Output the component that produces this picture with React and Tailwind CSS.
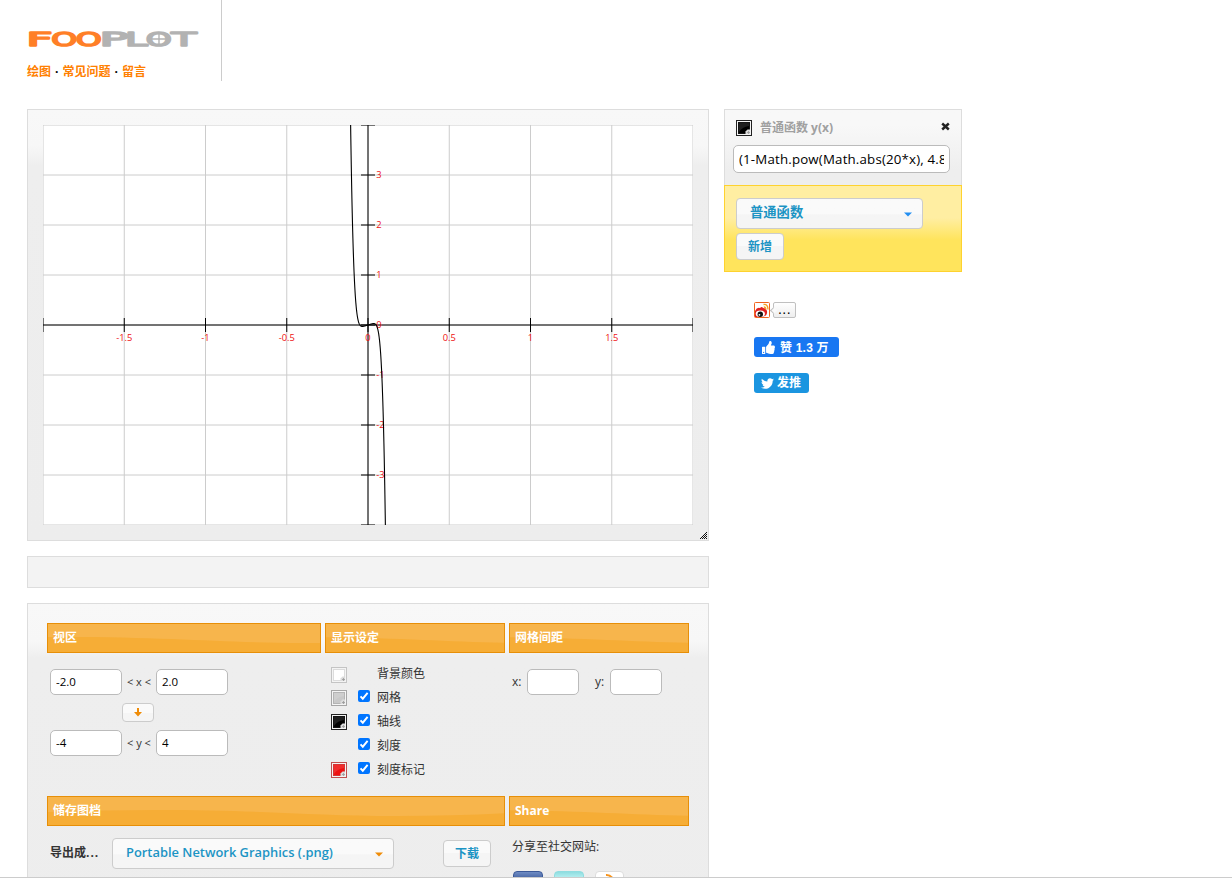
import { useState } from "react";
import { FaThumbsUp, FaTwitter } from "react-icons/fa";

const WIDTH = 650;
const HEIGHT = 400;
const X_UNIT = 162.5;
const Y_UNIT = 50;

const xTicks = [-1.5, -1, -0.5, 0, 0.5, 1, 1.5];
const yTicks = [3, 2, 1, 0, -1, -2, -3];

const toX = (x) => WIDTH / 2 + x * X_UNIT;
const toY = (y) => HEIGHT / 2 - y * Y_UNIT;

const f = (x) => (1 - Math.pow(Math.abs(20 * x), 4.8)) * x;

const curve = Array.from({ length: 241 })
  .map((_, i) => {
    const x = -0.12 + i * 0.001;
    return `${toX(x).toFixed(2)},${toY(f(x)).toFixed(2)}`;
  })
  .join(" ");

// dots of the resize grip: every other pixel below the diagonal
const gripDots = [];
for (let y = 0; y < 7; y++) {
  for (let x = 6 - y; x < 7; x++) {
    if ((x + y) % 2 === 0) gripDots.push([x, y]);
  }
}

function Logo() {
  const letters = [
    ["F", -0.5, 26, "#ff7f27"],
    ["O", 24.3, 26, "#ff7f27"],
    ["O", 48.8, 26, "#ff7f27"],
    ["P", 72.5, 29, "#b2b2b2"],
    ["L", 98, 22.5, "#b2b2b2"],
    ["O", 118.8, 26, "#b2b2b2"],
    ["T", 144.5, 25, "#b2b2b2"],
  ];
  return (
    <svg width="186" height="30" viewBox="0 0 186 30" className="block">
      {letters.map(([ch, x, w, color], i) => (
        <text
          key={i}
          x={x}
          y="23.3"
          textLength={w}
          lengthAdjust="spacingAndGlyphs"
          fill={color}
          stroke={color}
          strokeWidth="1.6"
          strokeLinejoin="round"
          fontFamily="DejaVu Sans"
          fontSize="19.8"
        >
          {ch}
        </text>
      ))}
      <path d="M123 16h18M132 10v12" stroke="#b2b2b2" strokeWidth="1.4" />
    </svg>
  );
}

function Graph() {
  return (
    <svg
      width={WIDTH}
      height={HEIGHT}
      viewBox={`0 0 ${WIDTH} ${HEIGHT}`}
      className="block bg-white"
      fontSize="9"
    >
      {/* Grid */}
      <g stroke="#cccccc">
        <rect width={WIDTH} height={HEIGHT} fill="none" />
        {xTicks.map((x) => (
          <line key={x} x1={toX(x)} x2={toX(x)} y1="0" y2={HEIGHT} />
        ))}
        {yTicks.map((y) => (
          <line key={y} x1="0" x2={WIDTH} y1={toY(y)} y2={toY(y)} />
        ))}
      </g>
      {/* Axes and ticks */}
      <g stroke="#000000">
        <line x1="0" x2={WIDTH} y1="200" y2="200" />
        <line x1="325" x2="325" y1="0" y2={HEIGHT} />
        {[-2, ...xTicks, 2].map((x) => (
          <line key={x} x1={toX(x)} x2={toX(x)} y1="193" y2="207" />
        ))}
        {[4, ...yTicks, -4].map((y) => (
          <line key={y} x1="318" x2="332" y1={toY(y)} y2={toY(y)} />
        ))}
      </g>
      {/* Labels */}
      <g fill="#ee1111" fontFamily="Open Sans" fontSize="9.3">
        {xTicks.map((x) => (
          <text key={x} x={toX(x)} y="216" textAnchor="middle">
            {x}
          </text>
        ))}
        {yTicks.map((y) => (
          <text key={y} x="333.2" y={toY(y) + 3}>
            {y}
          </text>
        ))}
      </g>
      <polyline points={curve} fill="none" stroke="#000000" strokeWidth="1.1" />
    </svg>
  );
}

function Swatch({ fill, edge, className = "" }) {
  return (
    <svg width="16" height="16" viewBox="0 0 16 16" className={`block shrink-0 ${className}`}>
      <rect x="0.5" y="0.5" width="15" height="15" fill="#f4f4f4" stroke={edge} />
      <rect x="2" y="2" width="12" height="12" fill={fill} />
      <path d="M3 3h10v3Q6 7 3 12z" fill="#ffffff" opacity="0.12" />
      <rect x="2.5" y="2.5" width="11" height="11" fill="none" stroke={edge} opacity="0.6" />
      <path d="M9.5 14v-2.5l2-2H14V14z" fill="#dcdcdc" />
      <path d="M12.5 11v3M11 12.5h3" stroke="#999999" strokeWidth="0.8" />
    </svg>
  );
}

function SectionHeader({ children }) {
  return (
    <div className="relative h-[30px] border border-[#e78f08] bg-[#f6ad36] pl-[5px] text-[12px] leading-[27px] font-bold text-white">
      <svg
        className="absolute inset-0 h-full w-full"
        viewBox="0 0 500 28"
        preserveAspectRatio="xMidYMid slice"
      >
        <path d="M0 0H500V15Q440 19 370 19C290 19 240 13 130 13Q60 13 0 16Z" fill="#f7b54c" />
      </svg>
      <span className="relative">{children}</span>
    </div>
  );
}

function Field({ value, onChange, className }) {
  return (
    <input
      value={value}
      onChange={(e) => onChange(e.target.value)}
      className={`block rounded-[5px] border border-[#bbbbbb] bg-white px-[5px] text-black outline-none ${className}`}
    />
  );
}

function Button({ children, className = "" }) {
  return (
    <button
      className={`block rounded-[4px] border border-[#cccccc] bg-gradient-to-b from-[#fafafa] from-50% to-[#f5f5f5] to-50% text-[12px] font-bold text-[#1c94c4] ${className}`}
    >
      {children}
    </button>
  );
}

function Select({ children, arrow, className }) {
  return (
    <button
      className={`flex h-[31px] items-center justify-between rounded-[4px] border border-[#cccccc] bg-gradient-to-b from-[#fafafa] from-50% to-[#f5f5f5] to-55% pr-[10px] pl-[13px] text-[#1c94c4] ${className}`}
    >
      <span className="pb-[1px]">{children}</span>
      <svg width="8" height="5" viewBox="0 0 8 5" fill={arrow} className="mt-[1px]">
        <path d="M0 0.5h8L4 4.5z" />
      </svg>
    </button>
  );
}

function CheckRow({ label, swatch, checked, onToggle, first }) {
  return (
    <div className="flex h-6 items-center">
      <div className="w-[27px]">
        {swatch && (
          <Swatch {...swatch} className={first ? "mt-1" : "mt-[2px]"} />
        )}
      </div>
      <div className="w-[19px]">
        {!first && (
          <button
            onClick={onToggle}
            className={`mb-[2px] block h-3 w-3 rounded-[2px] ${checked ? "bg-[#0075ff]" : "border border-gray-500 bg-white"}`}
          >
            {checked && (
              <svg viewBox="0 0 12 12" className="block h-3 w-3">
                <path d="M2.5 6.3 4.8 8.7 9.6 2.8" fill="none" stroke="#fff" strokeWidth="1.9" />
              </svg>
            )}
          </button>
        )}
      </div>
      <span className={`text-[12px] leading-6 ${first ? "pt-[2px]" : "pt-[1px]"}`}>{label}</span>
    </div>
  );
}

export default function App() {
  const [formula, setFormula] = useState("(1-Math.pow(Math.abs(20*x), 4.8))*x");
  const [view, setView] = useState({ x0: "-2.0", x1: "2.0", y0: "-4", y1: "4" });
  const [spacing, setSpacing] = useState({ x: "", y: "" });
  const [shown, setShown] = useState({ grid: true, axes: true, ticks: true, labels: true });

  const toggle = (key) => setShown({ ...shown, [key]: !shown[key] });

  return (
    <div className="flex h-[878px] w-[1232px] flex-col overflow-hidden border-b border-[#cccccc] bg-white font-['Open_Sans','Noto_Sans_CJK_SC',sans-serif] text-[12px] text-[#333333]">
      {/* Header */}
      <header className="h-[81px] w-[222px] shrink-0 border-r border-[#cccccc] pt-[23px] pl-[27px]">
        <Logo />
        <nav className="mt-[10px] flex text-[12px] leading-[18px] font-bold whitespace-pre text-[#ff8000]">
          <a>绘图</a>
          <span className="w-[11.5px] text-center text-black">·</span>
          <a>常见问题</a>
          <span className="w-[11.5px] text-center text-black">·</span>
          <a>留言</a>
        </nav>
      </header>

      <main className="mt-7 flex items-start gap-[15px] pl-[27px]">
        {/* Left column */}
        <div className="w-[682px] shrink-0">
          <div className="flex h-[432px] border border-[#dddddd] bg-[linear-gradient(#f8f8f8_0,#f7f7f7_36px,#eeeeee_56px,#ededed_100%)] pt-[15px] pl-[15px]">
            <Graph />
            <svg width="7" height="7" className="mt-auto mb-[1px] ml-[7px]" viewBox="0 0 7 7" fill="#111111">
              {gripDots.map(([x, y]) => (
                <rect key={`${x}-${y}`} x={x} y={y} width="1" height="1" />
              ))}
            </svg>
          </div>

          <div className="mt-[15px] h-8 border border-[#dddddd] bg-[#f3f3f3]" />

          {/* Settings */}
          <div className="mt-[15px] h-[420px] border border-[#dddddd] bg-[linear-gradient(#f8f8f8_0,#f7f7f7_38px,#eeeeee_54px,#ededed_100%)] pt-[19px] pl-[19px]">
            <div className="flex gap-1">
              <div className="h-[173px] w-[274px]">
                <SectionHeader>视区</SectionHeader>
                <div className="w-[181px] pt-4 pl-[3px]">
                  <div className="flex items-center">
                    <Field value={view.x0} onChange={(v) => setView({ ...view, x0: v })} className="h-[26px] w-[72px] pb-[1px] text-[11.5px]" />
                    <span className="w-[34px] text-center text-[11px]">&lt; x &lt;</span>
                    <Field value={view.x1} onChange={(v) => setView({ ...view, x1: v })} className="h-[26px] w-[72px] pb-[1px] text-[11.5px]" />
                  </div>
                  <Button className="my-2 ml-[72px] h-[19px] w-8">
                    <svg width="8" height="9" viewBox="0 0 8 9" className="mx-auto block">
                      <path d="M3 0h2v4h3L4 8.5 0 4h3z" fill="#ef8c08" />
                    </svg>
                  </Button>
                  <div className="flex items-center">
                    <Field value={view.y0} onChange={(v) => setView({ ...view, y0: v })} className="h-[26px] w-[72px] pb-[1px] text-[11.5px]" />
                    <span className="w-[34px] text-center text-[11px]">&lt; y &lt;</span>
                    <Field value={view.y1} onChange={(v) => setView({ ...view, y1: v })} className="h-[26px] w-[72px] pb-[1px] text-[11.5px]" />
                  </div>
                </div>
              </div>

              <div className="w-[180px]">
                <SectionHeader>显示设定</SectionHeader>
                <div className="pt-2 pl-[6px]">
                  <CheckRow first label="背景颜色" swatch={{ fill: "#ffffff", edge: "#c4c4c4" }} />
                  <CheckRow label="网格" swatch={{ fill: "#c8c8c8", edge: "#a6a6a6" }} checked={shown.grid} onToggle={() => toggle("grid")} />
                  <CheckRow label="轴线" swatch={{ fill: "#000000", edge: "#222222" }} checked={shown.axes} onToggle={() => toggle("axes")} />
                  <CheckRow label="刻度" checked={shown.ticks} onToggle={() => toggle("ticks")} />
                  <CheckRow label="刻度标记" swatch={{ fill: "#ee1111", edge: "#c05050" }} checked={shown.labels} onToggle={() => toggle("labels")} />
                </div>
              </div>

              <div className="w-[180px]">
                <SectionHeader>网格间距</SectionHeader>
                <div className="flex items-center pt-4 pl-[3px]">
                  <span className="w-[15px]">x:</span>
                  <Field value={spacing.x} onChange={(v) => setSpacing({ ...spacing, x: v })} className="h-[26px] w-[52px]" />
                  <span className="ml-4 w-[15px]">y:</span>
                  <Field value={spacing.y} onChange={(v) => setSpacing({ ...spacing, y: v })} className="h-[26px] w-[52px]" />
                </div>
              </div>
            </div>

            <div className="flex gap-1">
              <div className="w-[458px]">
                <SectionHeader>储存图档</SectionHeader>
                <div className="flex items-center pt-3 pl-[3px]">
                  <span className="w-[62px] pb-[1px] font-bold">
                    导出成<span className="tracking-[1px]">...</span>
                  </span>
                  <Select arrow="#ef8c08" className="w-[282px] text-[12.9px] font-semibold">
                    Portable Network Graphics (.png)
                  </Select>
                  <Button className="ml-[49px] h-[27px] w-12">下载</Button>
                </div>
              </div>
              <div className="w-[180px]">
                <SectionHeader>Share</SectionHeader>
                <div className="pt-3 pl-[3px] leading-[18px]">分享至社交网站:</div>
                <div className="mt-[15px] flex gap-[11px] pl-1">
                  <div className="h-[30px] w-[30px] rounded-[4px] border border-[#3b5998] bg-gradient-to-b from-[#6f8cc4] to-[#3b5998] to-30%" />
                  <div className="h-[30px] w-[30px] rounded-[4px] border border-[#8fdde0] bg-gradient-to-b from-[#8fdde0] to-[#b5eff0] to-20%" />
                  <div className="h-[30px] w-[29px] rounded-[4px] border border-[#dddddd] bg-white">
                    <svg width="27" height="28" viewBox="0 0 27 28">
                      <path d="M10 3Q17 2.5 20 14M10 6q5 0 8 8" fill="none" stroke="#f7941d" strokeWidth="2" />
                    </svg>
                  </div>
                </div>
              </div>
            </div>
          </div>
        </div>

        {/* Right column */}
        <div className="w-[238px]">
          <div className="h-[76px] border border-b-0 border-[#dddddd] bg-gradient-to-b from-[#f8f8f8] from-20% to-[#eeeeee] to-80% pt-[10px]">
            <div className="flex h-4 items-center pr-[11px] pl-[11px]">
              <Swatch fill="#000000" edge="#222222" />
              <span className="ml-2 text-[12px] font-bold text-[#a0a0a0]">普通函数 y(x)</span>
              <svg width="9" height="9" viewBox="0 0 9 9" className="mb-[3px] ml-auto">
                <path d="M1.2 1.5 7.8 7.5M7.8 1.5 1.2 7.5" stroke="#222222" strokeWidth="2.4" />
              </svg>
            </div>
            <Field value={formula} onChange={setFormula} className="mt-[9px] ml-2 h-7 w-[217px] text-[13.3px] tracking-[0.17px]" />
          </div>
          <div className="h-[87px] border border-[#fed22f] bg-[linear-gradient(#ffeea2_0,#ffeea2_32px,#ffe45c_54px,#ffe45c_100%)] pt-3 pl-[11px]">
            <Select arrow="#228ef1" className="w-[187px] text-[13.3px] font-bold">
              普通函数
            </Select>
            <Button className="mt-1 h-[27px] w-12">新增</Button>
          </div>

          {/* Social */}
          <div className="flex flex-col items-start pt-[30px] pl-[30px]">
            <div className="flex gap-[3px]">
              <svg width="16" height="16" viewBox="0 0 16 16">
                <rect x="0.5" y="0.5" width="15" height="15" rx="1" fill="#ffffff" stroke="#f0641e" />
                <path d="M1 9Q3 5 6 6 8 4 9 6 12 6 13 9 14 15 6 15H1z" fill="#e02020" />
                <ellipse cx="6.3" cy="11.8" rx="4.6" ry="3.2" fill="#ffffff" />
                <circle cx="6.3" cy="12.3" r="2.7" fill="#111111" />
                <circle cx="5.4" cy="12.8" r="0.9" fill="#ffffff" />
                <path d="M9.5 2.5Q14 2 14 7.5M9.8 5Q12 5 11.8 7.5" fill="none" stroke="#f5a01e" strokeWidth="1.3" />
              </svg>
              <div className="relative flex h-4 w-[23px] items-center justify-center rounded-[2px] border border-[#c0c0c0] bg-gradient-to-b from-white to-[#eeeeee]">
                <span className="absolute top-[5px] -left-[3px] h-[5px] w-[5px] rotate-45 border-b border-l border-[#c0c0c0] bg-[#fafafa]" />
                <span className="pb-[2px] font-['Liberation_Sans'] text-[14px] leading-none tracking-[0.5px] text-black">...</span>
              </div>
            </div>
            <button className="mt-[19px] flex h-5 w-[85px] items-center rounded-[3px] bg-[#1877f2] pl-2 font-['Liberation_Sans','Noto_Sans_CJK_SC',sans-serif] text-[12px] leading-5 text-white">
              <FaThumbsUp className="mr-[5px] h-[13px] w-[13px]" />
              <span className="pt-[1px] font-bold tracking-[0.2px]">赞 1.3 万</span>
            </button>
            <button className="mt-4 flex h-5 w-[55px] items-center rounded-[3px] bg-[#1b95e0] pl-[7px] text-[12px] leading-5 font-bold text-white">
              <FaTwitter className="mr-[3px] h-[13px] w-[13px]" />
              <span className="whitespace-nowrap">发推</span>
            </button>
          </div>
        </div>
      </main>
    </div>
  );
}
